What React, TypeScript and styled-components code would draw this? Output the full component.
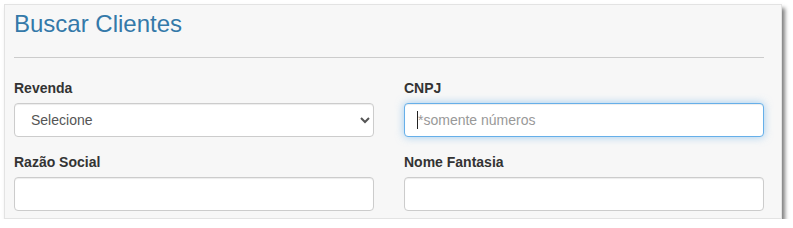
import styled, { createGlobalStyle } from 'styled-components';

const GlobalStyle = createGlobalStyle`
  html, body {
    margin: 0;
    padding: 0;
    background: #ffffff;
  }
  body {
    font-family: "Liberation Sans", Arial, Helvetica, sans-serif;
    font-size: 14px;
    line-height: 1.42857;
    color: #333333;
  }
  * {
    box-sizing: border-box;
  }
`;

const Panel = styled.div`
  margin: 4px 0 0 4px;
  width: 778px;
  background: #f7f7f7;
  border: 1px solid #e3e3e3;
  box-shadow: 3px 4px 4px rgba(0, 0, 0, 0.5);
  padding: 0 17px 7px 9px;
`;

const Title = styled.h3`
  margin: 6px 0 0;
  font-size: 24px;
  font-weight: 400;
  line-height: 1.1;
  color: #3479a9;
`;

const Divider = styled.hr`
  margin: 20px 0;
  border: 0;
  border-top: 1px solid #cccccc;
`;

const FormGrid = styled.div`
  display: grid;
  grid-template-columns: 1fr 1fr;
  column-gap: 30px;
  row-gap: 15px;
`;

const Field = styled.div`
  display: flex;
  flex-direction: column;
`;

const Label = styled.label`
  display: block;
  margin-bottom: 5px;
  font-weight: 700;
  font-size: 14px;
  line-height: 20px;
  color: #333333;
`;

const controlBase = `
  display: block;
  width: 100%;
  height: 34px;
  padding: 6px 12px;
  font-family: "Liberation Sans", Arial, Helvetica, sans-serif;
  font-size: 14px;
  line-height: 1.42857;
  color: #555555;
  background: #ffffff;
  border: 1px solid #cccccc;
  border-radius: 4px;
  box-shadow: inset 0 1px 1px rgba(0, 0, 0, 0.075);
  outline: none;
`;

const Select = styled.select`
  ${controlBase}
`;

const Input = styled.input<{ $focused?: boolean }>`
  ${controlBase}
  ${({ $focused }) =>
    $focused &&
    `
    padding-left: 13px;
    border-color: #66afe9;
    background: #ffffff linear-gradient(#222, #222) no-repeat 12px center / 1px 18px;
    box-shadow: inset 0 1px 1px rgba(0, 0, 0, 0.075), 0 0 8px rgba(102, 175, 233, 0.6);
  `}

  &::placeholder {
    color: #999999;
    opacity: 1;
  }
`;

export default function App() {
  return (
    <>
      <GlobalStyle />
      <Panel>
        <Title>Buscar Clientes</Title>
        <Divider />
        <FormGrid>
          <Field>
            <Label htmlFor="revenda">Revenda</Label>
            <Select id="revenda" defaultValue="">
              <option value="">Selecione</option>
            </Select>
          </Field>
          <Field>
            <Label htmlFor="cnpj">CNPJ</Label>
            <Input id="cnpj" $focused placeholder="*somente números" />
          </Field>
          <Field>
            <Label htmlFor="razao">Razão Social</Label>
            <Input id="razao" />
          </Field>
          <Field>
            <Label htmlFor="fantasia">Nome Fantasia</Label>
            <Input id="fantasia" />
          </Field>
        </FormGrid>
      </Panel>
    </>
  );
}
